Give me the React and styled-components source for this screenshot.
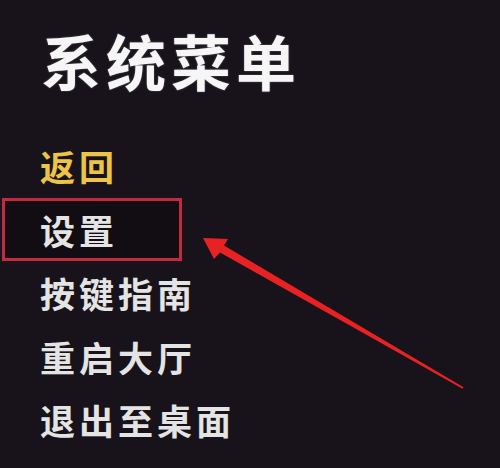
import React from 'react';
import styled, { createGlobalStyle } from 'styled-components';

const GlobalStyle = createGlobalStyle`
  html, body {
    margin: 0;
    padding: 0;
    background: #18131a;
  }
  * { box-sizing: border-box; }
`;

const Screen = styled.div`
  position: relative;
  width: 500px;
  height: 468px;
  overflow: hidden;
  background: #18131a;
  padding: 29px 0 0 2px;
  font-family: "Noto Sans CJK SC", "Noto Sans", sans-serif;
`;

const Title = styled.h1`
  margin: 0 0 43px 39px;
  font-size: 60px;
  line-height: 62px;
  font-weight: 700;
  letter-spacing: 5px;
  color: #f6f6f6;
  text-shadow: 0 0 2px rgba(255, 255, 255, 0.35);
`;

const Menu = styled.ul`
  list-style: none;
  margin: 0;
  padding: 0;
  display: flex;
  flex-direction: column;
`;

const Item = styled.li`
  display: flex;
  align-items: center;
  width: 180px;
  height: 63.5px;
  padding-left: 35px;
  border: 3px solid ${props => props.highlighted ? '#c42a3e' : 'transparent'};
  background: ${props => props.highlighted ? '#110d12' : 'transparent'};
  font-size: 35px;
  font-weight: 700;
  letter-spacing: 4px;
  white-space: nowrap;
  color: ${props => props.active ? '#ecc447' : '#e4e4e4'};
`;

const Arrow = styled.svg`
  position: absolute;
  left: 0;
  top: 0;
  pointer-events: none;
`;

const items = [
  { label: '返回', active: true },
  { label: '设置', highlighted: true },
  { label: '按键指南' },
  { label: '重启大厅' },
  { label: '退出至桌面' },
];

export default function App() {
  return (
    <>
      <GlobalStyle />
      <Screen>
        <Title>系统菜单</Title>
        <Menu>
          {items.map(item => (
            <Item key={item.label} active={item.active} highlighted={item.highlighted}>
              {item.label}
            </Item>
          ))}
        </Menu>
        <Arrow width="500" height="468" viewBox="0 0 500 468">
          <polygon
            points="203,238 228,239 224,245.5 463.5,387.2 462.5,388.8 220,252.5 214,259"
            fill="#e82222"
          />
        </Arrow>
      </Screen>
    </>
  );
}
